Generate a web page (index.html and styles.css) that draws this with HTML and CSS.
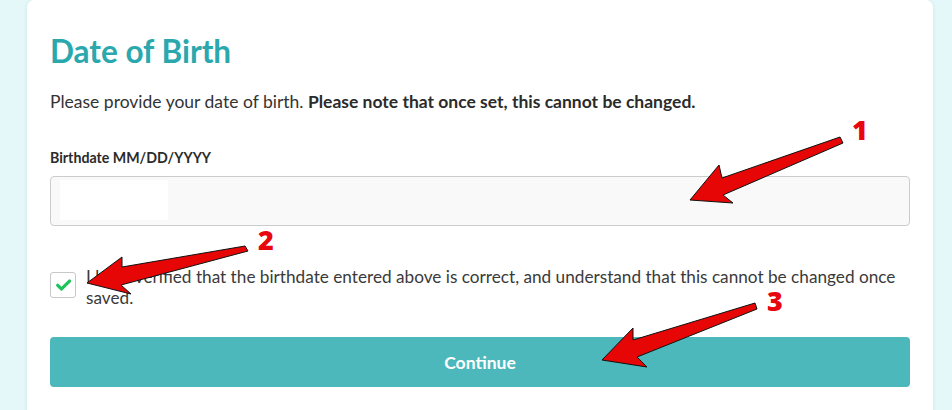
FILE: index.html
```html
<!DOCTYPE html>
<html lang="en">
<head>
<meta charset="utf-8">
<title>Date of Birth</title>
<link rel="stylesheet" href="styles.css">
</head>
<body>
<main class="card">
  <h1 class="title">Date of Birth</h1>
  <p class="intro">Please provide your date of birth. <strong>Please note that once set, this cannot be changed.</strong></p>
  <label class="field-label" for="dob">Birthdate MM/DD/YYYY</label>
  <div class="input" id="dob"><span class="mask"></span></div>
  <div class="check-row">
    <span class="checkbox">
      <svg class="check-icon" viewBox="0 0 14 11" width="15" height="12" aria-hidden="true">
        <path d="M1.6 5.8 L5.2 9.2 L12.6 1.8" fill="none" stroke="#1fc35c" stroke-width="3" stroke-linecap="round" stroke-linejoin="round"/>
      </svg>
    </span>
    <span class="check-text">I have verified that the birthdate entered above is correct, and understand that this cannot be changed once saved.</span>
  </div>
  <button class="btn" type="button">Continue</button>
</main>
<svg class="annotations" width="952" height="410" viewBox="0 0 952 410" aria-hidden="true">
  <g class="arrow">
    <polygon points="690,200 719,165 722,178 840,137 843,143 723,195 733,203"/>
    <polygon points="87,283 122,257 122,267 245,246 248,251 121,285 131,294"/>
    <polygon points="602,360 633,328 633,340 755,303 757,309 637,357 647,367"/>
  </g>
  <text class="num" x="852" y="140">1</text>
  <text class="num" x="258" y="250">2</text>
  <text class="num" x="767" y="311">3</text>
</svg>
</body>
</html>
```
FILE: styles.css
```css
html, body {
  margin: 0;
  padding: 0;
}
body {
  background: #e4f8fa;
  font-family: Lato, "Liberation Sans", sans-serif;
  color: #333333;
  width: 952px;
  height: 410px;
  overflow: hidden;
  position: relative;
}
.card {
  margin-left: 27px;
  width: 906px;
  height: 440px;
  box-sizing: border-box;
  background: #ffffff;
  border-radius: 7px;
  box-shadow: 0 0 4px rgba(0, 0, 0, 0.08);
  padding: 31px 23px 0 23px;
  display: flex;
  flex-direction: column;
  align-items: stretch;
}
.title {
  margin: 0;
  font-size: 31.5px;
  line-height: 40px;
  font-weight: 700;
  color: #2aa8ad;
}
.intro {
  margin: 19px 0 0 0;
  font-size: 17.5px;
  line-height: 24px;
}
.intro strong {
  font-weight: 700;
  color: #2b2b2b;
}
.field-label {
  margin-top: 34px;
  font-size: 14.2px;
  line-height: 20px;
  font-weight: 700;
  color: #2b2b2b;
}
.input {
  margin-top: 8px;
  height: 50px;
  box-sizing: border-box;
  background: #f9f9f9;
  border: 1px solid #cccccc;
  border-radius: 4px;
  padding: 3px 9px;
  display: flex;
  align-items: flex-start;
}
.mask {
  width: 108px;
  height: 40px;
  background: #ffffff;
}
.check-row {
  margin-top: 40px;
  display: flex;
  align-items: flex-start;
  gap: 10px;
}
.checkbox {
  flex: none;
  margin-top: 6px;
  width: 26px;
  height: 26px;
  box-sizing: border-box;
  border: 1px solid #c8c8c8;
  border-radius: 3px;
  background: #ffffff;
  display: flex;
  align-items: center;
  justify-content: center;
}
.check-text {
  font-size: 17.2px;
  line-height: 21px;
  color: #3a3a3a;
}
.btn {
  margin-top: 29px;
  height: 50px;
  border: none;
  border-radius: 4px;
  background: #4cb8bb;
  color: #ffffff;
  font-family: inherit;
  font-size: 17.5px;
  font-weight: 700;
  padding: 0;
}
.annotations {
  position: absolute;
  left: 0;
  top: 0;
  pointer-events: none;
}
.arrow polygon {
  fill: #e60606;
  stroke: #111111;
  stroke-width: 1;
  stroke-linejoin: miter;
}
.num {
  font-family: "Open Sans", Lato, sans-serif;
  font-weight: 800;
  font-size: 27px;
  fill: #e8070e;
}
```
